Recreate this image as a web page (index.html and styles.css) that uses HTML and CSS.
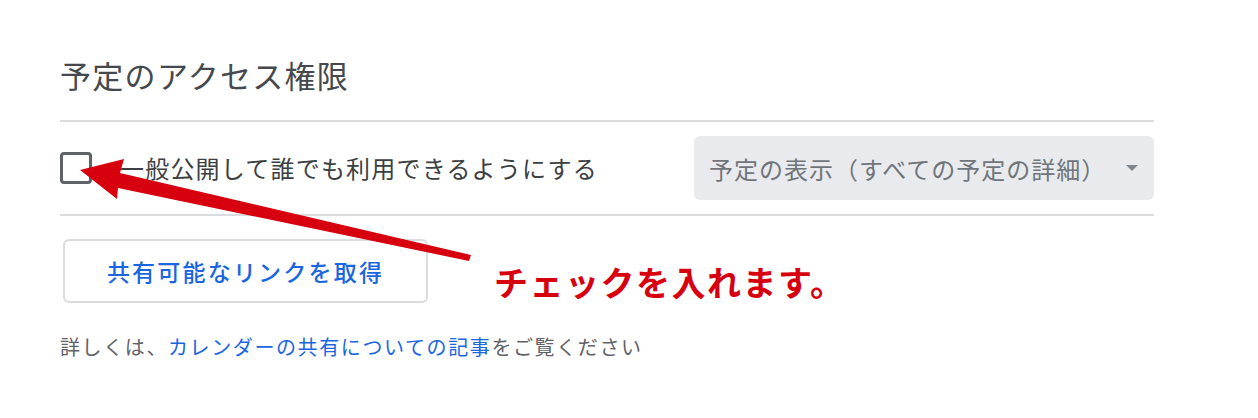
FILE: index.html
```html
<!DOCTYPE html>
<html lang="ja">
<head>
    <meta charset="utf-8">
    <title>予定のアクセス権限</title>
    <link rel="stylesheet" href="styles.css">
</head>
<body>
    <div class="page">
        <div class="section-title">予定のアクセス権限</div>

        <div class="access-row">
            <label class="public-option">
                <span class="checkbox"></span>
                <span class="option-text">一般公開して誰でも利用できるようにする</span>
            </label>
            <div class="select-box">
                <span class="select-text">予定の表示（すべての予定の詳細）</span>
                <span class="select-arrow"></span>
            </div>
        </div>

        <div class="link-area">
            <button class="link-button">共有可能なリンクを取得</button>
        </div>

        <p class="help-text">詳しくは、<a href="#" class="help-link">カレンダーの共有についての記事</a>をご覧ください</p>

        <!-- annotation -->
        <svg class="note-arrow" width="1258" height="418" viewBox="0 0 1258 418">
            <polygon points="80,170 124,159 120,173 471,255 469,261 118,188 117,199" fill="#d6000f"/>
        </svg>
        <div class="note-text">チェックを入れます。</div>
    </div>
</body>
</html>
```

FILE: styles.css
```css
body {
    margin: 0;
    background: #ffffff;
    font-family: "Noto Sans CJK JP", "Noto Sans", sans-serif;
}
.page {
    position: relative;
    width: 1258px;
    height: 418px;
    padding: 55px 104px 0 60px;
    box-sizing: border-box;
}
.section-title {
    font-size: 31px;
    line-height: 40px;
    color: #45484c;
    letter-spacing: 1.3px;
    padding-bottom: 25px;
    border-bottom: 2px solid #dadce0;
}
.access-row {
    display: flex;
    align-items: center;
    padding: 14px 0;
    border-bottom: 2px solid #dadce0;
}
.public-option {
    flex: 1;
    display: flex;
    align-items: center;
    gap: 28px;
}
.checkbox {
    width: 26px;
    height: 26px;
    border: 3px solid #5f6368;
    border-radius: 4px;
}
.option-text {
    font-size: 24px;
    line-height: 34px;
    color: #3c4043;
    letter-spacing: 1.2px;
}
.select-box {
    width: 460px;
    height: 64px;
    box-sizing: border-box;
    background: #e8eaed;
    border-radius: 6px;
    display: flex;
    align-items: center;
    justify-content: space-between;
    padding: 0 16px 0 15px;
}
.select-text {
    font-size: 24px;
    color: #70757a;
    letter-spacing: 1px;
}
.select-arrow {
    width: 0;
    height: 0;
    border-left: 6px solid transparent;
    border-right: 6px solid transparent;
    border-top: 6px solid #80868b;
}
.link-area {
    padding: 23px 0 0 3px;
}
.link-button {
    width: 365px;
    height: 64px;
    background: #ffffff;
    border: 2px solid #dadce0;
    border-radius: 6px;
    font-family: inherit;
    font-size: 23px;
    font-weight: 500;
    color: #1a66e0;
    letter-spacing: 2.2px;
}
.help-text {
    margin: 29px 0 0;
    font-size: 20px;
    color: #5f6368;
    letter-spacing: 1.6px;
}
.help-link {
    color: #1a66e0;
    text-decoration: none;
}
.note-arrow {
    position: absolute;
    left: 0;
    top: 0;
}
.note-text {
    position: absolute;
    left: 494px;
    top: 257px;
    font-size: 34px;
    font-weight: 700;
    color: #d6000f;
    letter-spacing: 1.5px;
}
```
